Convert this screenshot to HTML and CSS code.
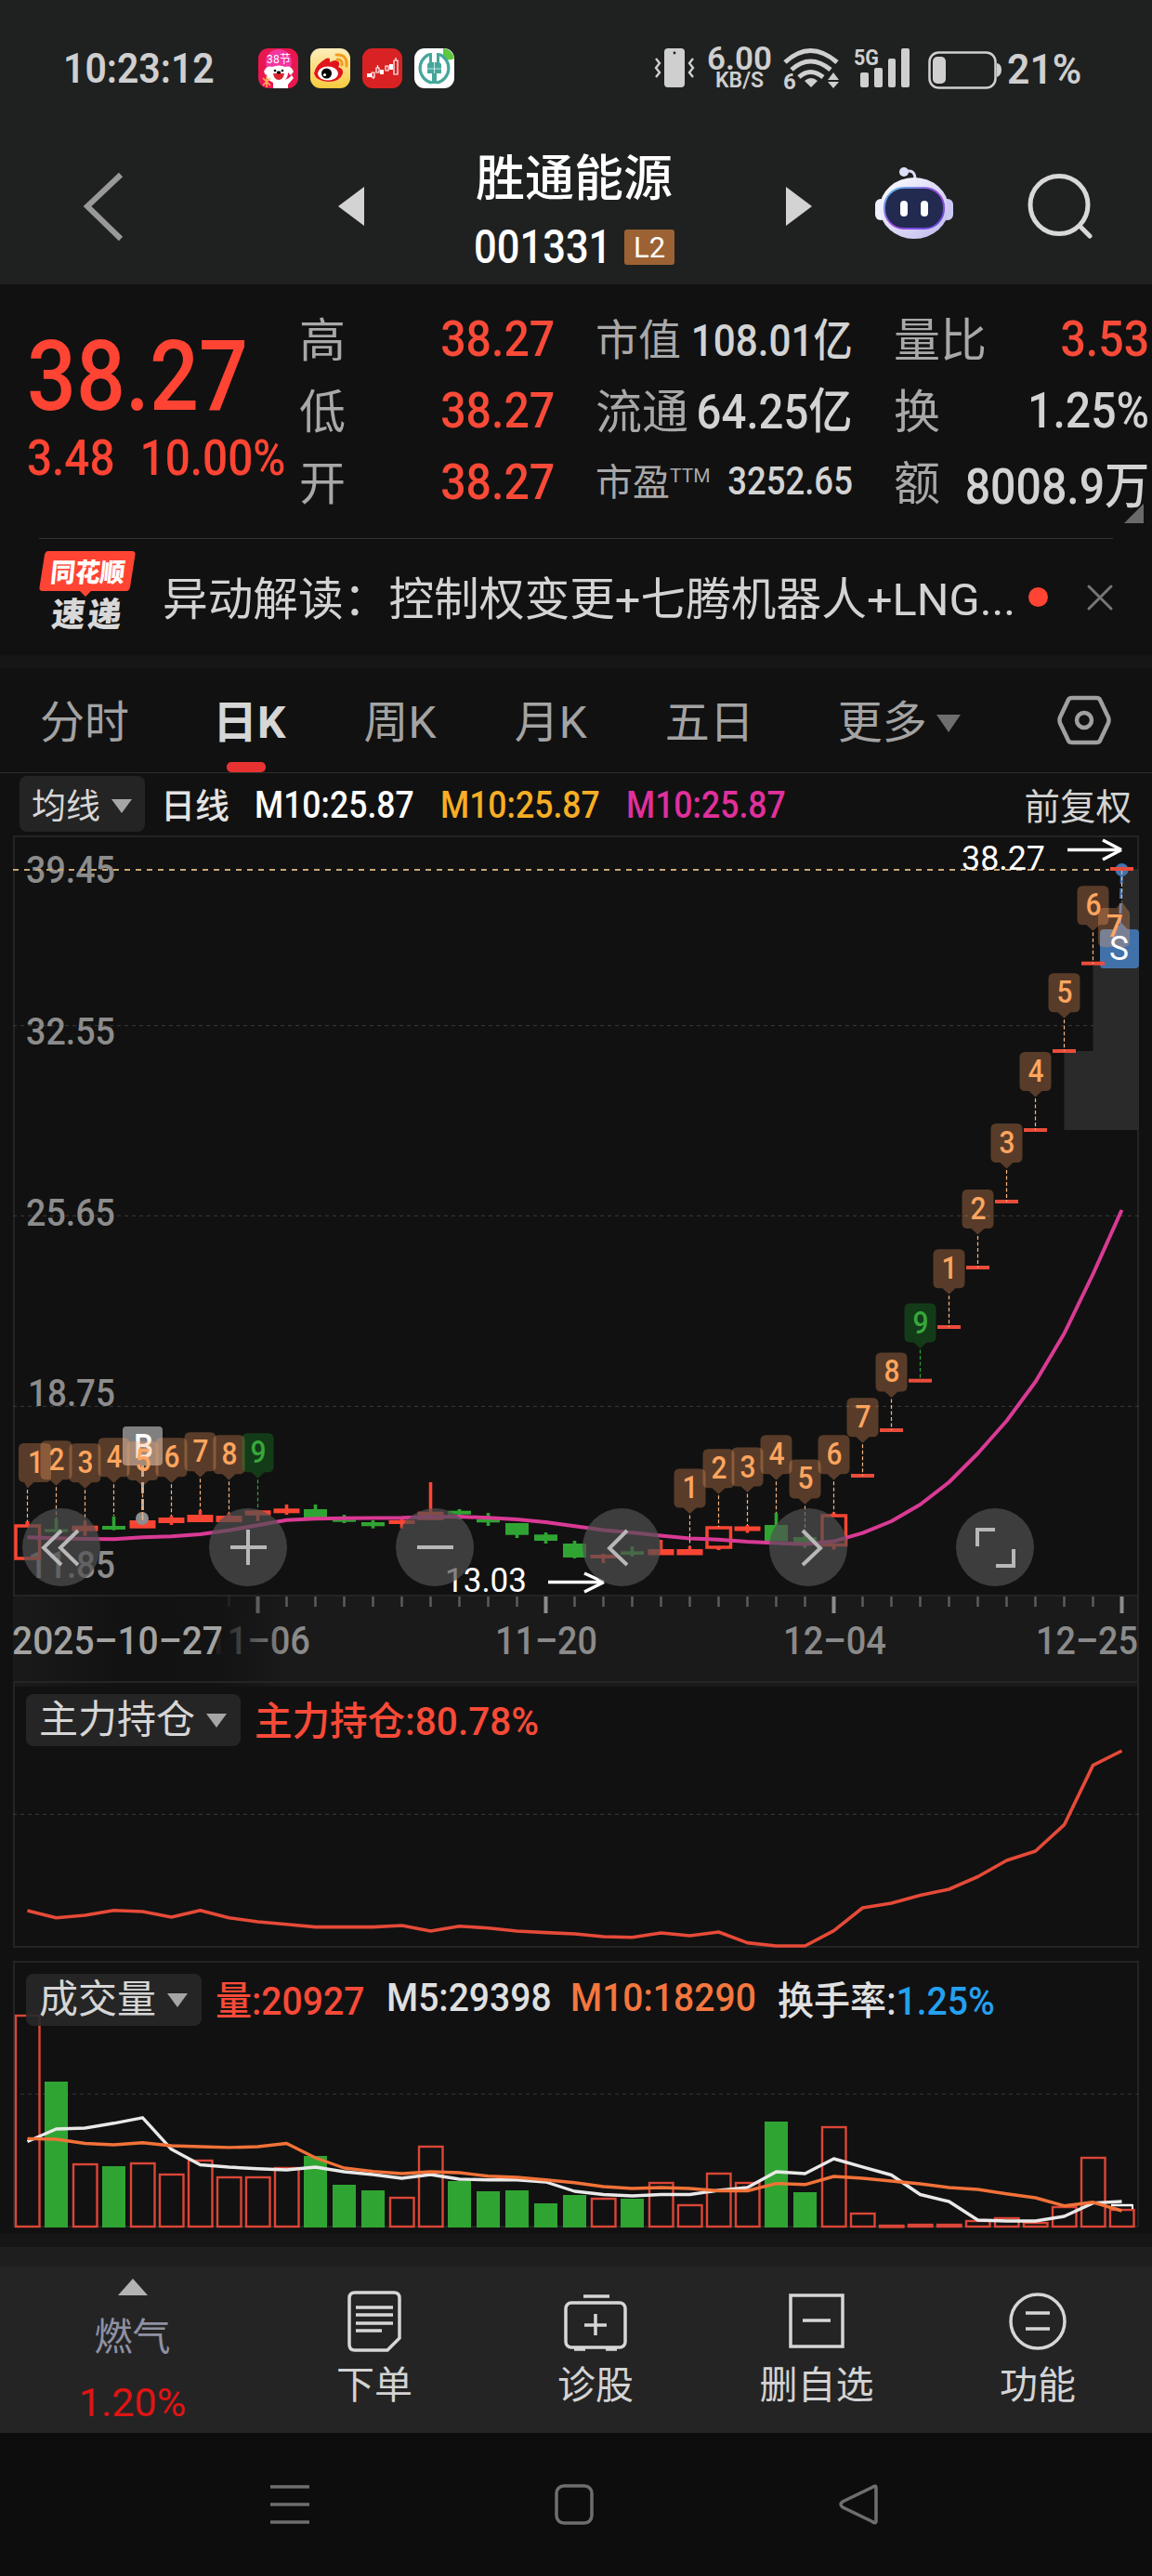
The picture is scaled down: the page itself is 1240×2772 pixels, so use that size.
FILE: index.html
```html
<!DOCTYPE html>
<html lang="zh-CN">
<head>
    <meta charset="UTF-8">
    <meta name="viewport" content="width=device-width, initial-scale=1.0">
    <title>胜通能源 001331</title>
    <link rel="stylesheet" href="styles.css">
</head>
<body>
    <header class="top">
        <div class="status-bar">
            <span class="clock">10:23:12</span>
            <div class="app-icons">
                <svg width="43" height="43" viewBox="0 0 43 43">
                    <rect width="43" height="43" rx="11" fill="#e8174f"/>
                    <circle cx="22" cy="15" r="14" fill="#f336a0"/>
                    <text x="9" y="16" font-size="12" textLength="26" fill="#fff">38节</text>
                    <path d="M6 25q3-7 9-5q7-3 14 0q6-2 9 5l-3 4l-3-3q0 6-4 8l5-2l3-3l2 3l-6 7v4H16v-6l-5-3q-2-2-2-6l-1 1z" fill="#fff"/>
                    <path d="M16 27h12q-1 7-6 7t-6-7z" fill="#d9232e"/>
                    <circle cx="18" cy="24" r="1.3"/><circle cx="26" cy="24" r="1.3"/><ellipse cx="22" cy="26" rx="2.4" ry="1.4"/>
                    <path d="M5 32l8 8M13 32l-8 8M9 30v12" stroke="#ffb35c" stroke-width="1.5"/>
                </svg>
                <svg width="43" height="43" viewBox="0 0 43 43">
                    <defs><linearGradient id="wb" x2="0" y2="1"><stop stop-color="#fdeebb"/><stop offset="1" stop-color="#f8cb3d"/></linearGradient></defs>
                    <rect width="43" height="43" rx="11" fill="url(#wb)"/>
                    <path d="M4 27Q6 17 17 11q5-2 4 4q7-4 10 0q1 3-1 5q6 2 5 7q-3 9-16 9Q6 35 4 27z" fill="#e1141d"/>
                    <ellipse cx="19" cy="27" rx="11" ry="7.5" fill="#fff"/>
                    <circle cx="17.500" cy="27" r="5.500"/><circle cx="15.500" cy="28.500" r="1.600" fill="#fff"/>
                    <path d="M28 7q12-1 11 12M29 12q6 0 5 6" fill="none" stroke="#f39a1e" stroke-width="3" stroke-linecap="round"/>
                </svg>
                <svg width="43" height="43" viewBox="0 0 43 43">
                    <rect width="43" height="43" rx="11" fill="#d92223"/>
                    <path d="M5 27h5v4H5zM19 23h4v5h-4zM29 17h4v6h-4z" fill="#fff"/>
                    <path d="M10 26h3v5h-3zM15 21h3v5h-3zM25 19h3v5h-3zM34 13h4v15h-4zM12 31v2M16.500 18v3M36 10v3" fill="none" stroke="#fff" stroke-width="1.200"/>
                </svg>
                <svg width="43" height="43" viewBox="0 0 43 43">
                    <rect width="43" height="43" rx="11" fill="#fff"/>
                    <path d="M31 0q10 1 12 11q-8 4-12-3z" fill="#5fc83c"/>
                    <path d="M16 6.500A16 16 0 0 0 19 37M27 6.500A16 16 0 0 1 24 37" fill="none" stroke="#45a79b" stroke-width="3.200"/>
                    <path d="M16 5h3v10h5V5h3v10l2 2v10h-5v11h-5V27h-5V17l2-2z" fill="#45a79b"/>
                    <path d="M14 22h15M21.500 15v12" stroke="#fff" stroke-width=".7"/>
                </svg>
            </div>
            <div class="status-right">
                <svg width="44" height="43" viewBox="0 0 44 43" fill="#cfcfcf">
                    <rect x="11" y="0" width="22" height="42" rx="4"/>
                    <circle cx="22" cy="5" r="1.400" fill="#1f2120"/>
                    <path d="M2 11l4 5l-4 5l4 5l-4 5M42 11l-4 5l4 5l-4 5l4 5" fill="none" stroke="#cfcfcf" stroke-width="2.400"/>
                </svg>
                <div class="net-speed"><b>6.00</b><span>KB/S</span></div>
                <svg class="wifi" width="62" height="45" viewBox="0 0 62 45" fill="none" stroke="#cfcfcf" stroke-width="5">
                    <path d="M2 15q27-25 56 0M9 23q20-18 42 0M17 31q12-11 26 0"/>
                    <path d="M23 35q7-6 14 0l-7 7z" fill="#cfcfcf" stroke="none"/>
                    <path d="M54 26l6 8H48zM54 43l6-7H48z" fill="#cfcfcf" stroke="none"/>
                    <text x="0" y="44" font-size="24" font-weight="700" fill="#cfcfcf" stroke="none">6</text>
                </svg>
                <svg class="signal" width="61" height="43" viewBox="0 0 61 43" fill="#cfcfcf">
                    <text x="0" y="18" font-size="24" font-weight="700" textLength="27" lengthAdjust="spacingAndGlyphs">5G</text>
                    <rect x="7" y="26" width="9" height="16" rx="2"/><rect x="22" y="21" width="9" height="21" rx="2"/>
                    <rect x="37" y="11" width="8" height="31" rx="2"/><rect x="51" y="0" width="9" height="42" rx="2"/>
                </svg>
                <svg class="battery" width="80" height="41" viewBox="0 0 80 41">
                    <rect x="1.500" y="1.500" width="71" height="38" rx="10" fill="none" stroke="#cfcfcf" stroke-width="2.500"/>
                    <rect x="5" y="6" width="14" height="29" rx="5" fill="#cfcfcf"/>
                    <path d="M74 13q5 1 5 7t-5 8z" fill="#cfcfcf"/>
                </svg>
                <span class="battery-text">21%</span>
            </div>
        </div>
        <div class="title-bar">
            <svg class="back" width="44" height="76" viewBox="0 0 44 76"><path d="M40 3L4 37L40 72" fill="none" stroke="#999" stroke-width="6"/></svg>
            <svg class="prev" width="28" height="42" viewBox="0 0 28 42"><path d="M28 0v42L0 21z" fill="#d3d3d3"/></svg>
            <div class="stock">
                <h1>胜通能源</h1>
                <div class="stock-code"><span>001331</span><i>L2</i></div>
            </div>
            <svg class="next" width="28" height="42" viewBox="0 0 28 42"><path d="M0 0v42L28 21z" fill="#d3d3d3"/></svg>
            <svg class="robot" width="84" height="78" viewBox="0 0 84 78">
                <defs>
                    <linearGradient id="head" x2="1" y2="1"><stop stop-color="#fff"/><stop offset="1" stop-color="#bdb8ee"/></linearGradient>
                    <linearGradient id="rim" x2="1" y2="1"><stop stop-color="#56c8e8"/><stop offset=".5" stop-color="#a24ae0"/><stop offset="1" stop-color="#5a4fe0"/></linearGradient>
                </defs>
                <path d="M31 5q12-4 12 8" fill="none" stroke="#dcdcf5" stroke-width="3"/>
                <circle cx="31" cy="5" r="5" fill="#dfe1fa"/>
                <rect x="0" y="34" width="12" height="23" rx="6" fill="#f0f0fc"/>
                <rect x="72" y="34" width="12" height="23" rx="6" fill="#cbc8f2"/>
                <ellipse cx="42" cy="44" rx="37" ry="33" fill="url(#head)"/>
                <rect x="10" y="22" width="64" height="44" rx="21" fill="#222a50" stroke="url(#rim)" stroke-width="2"/>
                <rect x="27" y="36" width="8" height="17" rx="4" fill="#fff"/><rect x="49" y="36" width="8" height="17" rx="4" fill="#fff"/>
            </svg>
            <svg class="search" width="72" height="70" viewBox="0 0 72 70" fill="none" stroke="#d8d8d8" stroke-width="5">
                <circle cx="34" cy="33.500" r="31"/><path d="M56 56l11 11" stroke-linecap="round"/>
            </svg>
        </div>
    </header>

    <section class="quote">
        <div class="price-box">
            <div class="price">38.27</div>
            <div class="change"><span>3.48</span><span>10.00%</span></div>
        </div>
        <div class="col col-1">
            <p><span>高</span><b class="red">38.27</b></p>
            <p><span>低</span><b class="red">38.27</b></p>
            <p><span>开</span><b class="red">38.27</b></p>
        </div>
        <div class="col col-2">
            <p class="mid"><span>市值</span><b>108.01亿</b></p>
            <p><span>流通</span><b>64.25亿</b></p>
            <p class="small"><span>市盈<sup>TTM</sup></span><b>3252.65</b></p>
        </div>
        <div class="col col-3">
            <p><span>量比</span><b class="red">3.53</b></p>
            <p><span>换</span><b>1.25%</b></p>
            <p><span>额</span><b>8008.9万</b></p>
        </div>
        <svg class="corner" width="21" height="21" viewBox="0 0 21 21"><path d="M21 0v21H0z" fill="#6a6a6a"/></svg>
    </section>

    <section class="news">
        <svg width="104" height="100" viewBox="0 0 104 100" font-weight="900">
            <path d="M10 0h90q4 0 3.500 4L98 39q-1 4-4 4H56l-6 6l-6-6H4q-4 0-3.500-4L6 4q1-4 4-4z" fill="#ff4433"/>
            <g transform="skewX(-6)">
                <text x="15" y="33" font-size="28" textLength="80" lengthAdjust="spacingAndGlyphs" fill="#fff">同花顺</text>
                <text x="21" y="81" font-size="36" textLength="75" fill="#d8d8d8">速递</text>
            </g>
        </svg>
        <p class="news-text">异动解读：控制权变更+七腾机器人+LNG...</p>
        <i class="dot"></i>
        <svg class="close" width="28" height="28" viewBox="0 0 28 28"><path d="M2 2l24 24M26 2L2 26" stroke="#777" stroke-width="3" stroke-linecap="round"/></svg>
    </section>

    <nav class="tabs">
        <a>分时</a>
        <a class="k active">日K</a>
        <a class="k">周K</a>
        <a class="k">月K</a>
        <a>五日</a>
        <a>更多<i class="caret"></i></a>
        <svg class="setting" width="58" height="54" viewBox="0 0 58 54" fill="none" stroke="#a0a0a0" stroke-width="4.500" stroke-linejoin="round">
            <path d="M16 3h26q3 0 4 2l9 19q1 3 0 6l-9 19q-1 2-4 2H16q-3 0-4-2L3 30q-1-3 0-6l9-19q1-2 4-2z"/><circle cx="29" cy="27" r="8"/>
        </svg>
    </nav>

    <div class="ma-row">
        <button class="pill">均线<i class="caret"></i></button>
        <span class="period">日线</span>
        <b class="white">M10:25.87</b>
        <b class="yellow">M10:25.87</b>
        <b class="pink">M10:25.87</b>
        <span class="adjust">前复权</span>
    </div>

    <main>
        <div class="chart">
            <svg id="kline" width="1240" height="919" viewBox="0 898 1240 919"></svg>
            <div class="chart-tools">
                <button><svg viewBox="0 0 84 84"><path d="M42 24L23 42.500L42 61M60 24L41 42.500L60 61"/></svg></button>
                <button><svg viewBox="0 0 84 84"><path d="M23 42h39M42 23v38"/></svg></button>
                <button><svg viewBox="0 0 84 84"><path d="M23 42h39"/></svg></button>
                <button><svg viewBox="0 0 84 84"><path d="M48 24L29 43L48 61"/></svg></button>
                <button><svg viewBox="0 0 84 84"><path d="M36 24L55 43L36 61"/></svg></button>
                <button><svg viewBox="0 0 84 84"><path d="M23 41V23h19M62 44v18H43"/></svg></button>
            </div>
        </div>
        <div class="chart">
            <svg id="position" width="1240" height="287" viewBox="0 1817 1240 287"></svg>
            <div class="chart-head head-position">
                <button class="pill">主力持仓<i class="caret"></i></button>
                <b class="red">主力持仓:80.78%</b>
            </div>
        </div>
        <div class="chart">
            <svg id="volume" width="1240" height="300" viewBox="0 2104 1240 300"></svg>
            <div class="chart-head head-volume">
                <button class="pill">成交量<i class="caret"></i></button>
                <b class="red">量:20927</b>
                <b class="m5">M5:29398</b>
                <b class="m10">M10:18290</b>
                <b class="rate">换手率:<em>1.25%</em></b>
            </div>
        </div>
    </main>

    <footer class="toolbar">
        <a class="sector">
            <svg width="32" height="18" viewBox="0 0 32 18"><path d="M16 0l16 18H0z" fill="#b3b3b3"/></svg>
            <span>燃气</span>
            <em>1.20%</em>
        </a>
        <a>
            <svg width="70" height="66" viewBox="0 0 70 66"><path d="M14 2h42q6 0 6 6v43L49 64H14q-6 0-6-6V8q0-6 6-6zM15 18h40M15 26h40M15 35h40M15 43h28"/></svg>
            <span>下单</span>
        </a>
        <a>
            <svg width="70" height="66" viewBox="0 0 70 66"><rect x="3" y="13" width="64" height="48" rx="6"/><path d="M22 6h28M12 63h12M46 63h12M35 25v23M23 37h24"/></svg>
            <span>诊股</span>
        </a>
        <a>
            <svg width="70" height="66" viewBox="0 0 70 66"><rect x="7" y="5" width="56" height="55"/><path d="M20 32h30"/></svg>
            <span>删自选</span>
        </a>
        <a>
            <svg width="70" height="66" viewBox="0 0 70 66"><circle cx="35" cy="33" r="29"/><path d="M22 24h26M22 41h26"/></svg>
            <span>功能</span>
        </a>
    </footer>

    <div class="system-nav">
        <svg width="42" height="44" viewBox="0 0 42 44"><path d="M0 3h42M0 22h42M0 41h42"/></svg>
        <svg width="42" height="44" viewBox="0 0 42 44"><rect x="2" y="2" width="38" height="40" rx="8"/></svg>
        <svg width="42" height="44" viewBox="0 0 42 44"><path d="M36 3.500q4-3 4 1v35q0 4-4 1L4 25q-4-3 0-6z"/></svg>
    </div>

    <script>
        var X0 = 29.5, STEP = 31;
        var RED = "#f94533", GREEN = "#30a432";

        function px(i) { return X0 + STEP * i; }

        function rect(x, y, w, h, attrs) {
            return '<rect x="' + x + '" y="' + y + '" width="' + w + '" height="' + h + '" ' + attrs + '/>';
        }

        function line(x1, y1, x2, y2, color, width, dash) {
            return '<path d="M' + x1 + ' ' + y1 + 'L' + x2 + ' ' + y2 + '" fill="none" stroke="' + color + '" stroke-width="' + width + '"' + (dash ? ' stroke-dasharray="' + dash + '"' : '') + '/>';
        }

        // every label is fitted to a fixed width
        function label(x, y, str, size, width, color, weight) {
            return '<text x="' + x + '" y="' + y + '" font-size="' + size + '" textLength="' + width + '" lengthAdjust="spacingAndGlyphs" fill="' + color + '" font-weight="' + (weight || 400) + '">' + str + '</text>';
        }

        function curve(ys, color, width) {
            var pts = ys.map(function(y, i) { return px(i) + "," + y; }).join(" ");
            return '<polyline points="' + pts + '" fill="none" stroke="' + color + '" stroke-width="' + width + '" stroke-linejoin="round"/>';
        }

        function frame(top, bottom) {
            return rect(15, top, 1210, bottom - top, 'fill="none" stroke="#242424" stroke-width="2"');
        }

        // kind, body top, body bottom, high, low
        var candles = [
            ["h", 1642, 1677, 1637, 1677], ["g", 1645.5, 1648.5, 1634, 1649], ["r", 1641.7, 1647.7, 1637, 1652.7],
            ["g", 1642, 1646, 1631.7, 1646.7], ["r", 1636, 1644.7, 1630, 1644], ["r", 1633, 1639, 1631, 1641],
            ["r", 1630, 1638, 1625, 1638], ["r", 1631, 1638, 1628, 1638], ["r", 1625.3, 1630.7, 1625, 1636.7],
            ["r", 1623.3, 1628.3, 1619, 1630], ["g", 1624, 1633, 1619, 1633], ["g", 1635.3, 1637.7, 1630, 1639],
            ["g", 1638, 1642.3, 1636, 1644.7], ["r", 1635.7, 1640, 1632, 1644.7], ["r", 1626.7, 1635.7, 1595, 1635],
            ["g", 1625.7, 1629.7, 1624, 1635], ["g", 1635, 1638.3, 1628, 1642], ["g", 1639, 1651.7, 1639, 1655],
            ["g", 1651.3, 1658, 1649, 1661], ["g", 1661, 1676, 1658, 1677], ["r", 1673, 1677, 1672, 1682],
            ["g", 1669.3, 1673, 1664, 1675], ["r", 1667, 1673.5, 1657, 1673], ["r", 1667, 1673.5, 1664, 1673],
            ["h", 1644, 1665, 1642, 1668], ["r", 1642.5, 1647.5, 1641, 1649.5], ["g", 1641, 1658.6, 1628, 1658],
            ["g", 1654, 1660, 1652, 1665.7], ["h", 1631, 1662.5, 1627.5, 1667.5]
        ];
        var limitUps = [1588, 1539, 1485.7, 1428, 1364, 1293, 1216, 1131, 1036.7, 935];

        var ma = [1654.3, 1655.3, 1656, 1656.3, 1654.3, 1653.2, 1651, 1646.7, 1641.3, 1635.7, 1634.3, 1633.7, 1633.5, 1633.3, 1632.3, 1632, 1633.3, 1635, 1638, 1642.3, 1646.4, 1649.3, 1652.5, 1655.4, 1656.8, 1659, 1660.4, 1661.8, 1658.6, 1649.6, 1637, 1619, 1595, 1564, 1529, 1487, 1435, 1371, 1302];

        // index, number, box top, stem end
        var badges = [
            [0, 1, 1553, 1637], [1, 2, 1550.3, 1634], [2, 3, 1553.3, 1637], [3, 4, 1547.3, 1631], [4, 5, 1551, 1636],
            [5, 6, 1547.3, 1631], [6, 7, 1541.3, 1625], [7, 8, 1544.3, 1628], [8, 9, 1542.3, 1626],
            [23, 1, 1580.4, 1664], [24, 2, 1559.3, 1643], [25, 3, 1557.5, 1641], [26, 4, 1544.3, 1628],
            [27, 5, 1570.4, 1654], [28, 6, 1544.3, 1628], [29, 7, 1504.3, 1588], [30, 8, 1455.4, 1539],
            [31, 9, 1402.5, 1485], [32, 1, 1344.3, 1428], [33, 2, 1280, 1364], [34, 3, 1209, 1293],
            [35, 4, 1132, 1216], [36, 5, 1047.3, 1131], [37, 6, 953.3, 1037]
        ];

        function drawBadge(b) {
            var x = px(b[0]), top = b[2];
            var left = Math.max(x - 17, 21);
            var green = b[1] === 9;
            var fill = green ? "#1fa02a" : "#ffa264";
            var bg = '<path d="M' + (left + 6) + ' ' + top + 'h22q6 0 6 6v30q0 6-6 6H' + Math.max(x + 7, left + 12) + 'L' + x + ' ' + (top + 48.5) + 'L' + Math.max(x - 7, left + 5) + ' ' + (top + 42) + 'h-' + Math.max(0, Math.max(x - 7, left + 5) - left - 6) + 'q-6 0-6-6v-30q0-6 6-6z" fill="' + fill + '" fill-opacity=".3"/>';
            return line(x, top + 50, x, b[3], green ? "#30a432" : "#f7b683", 1.2, "4 2.5") + bg +
                label(left + 9, top + 32, b[1], 33, 17, green ? "#37a83a" : "#ffa55f", 500);
        }

        function drawKline() {
            var s = "", i;
            s += rect(14, 1717, 1212, 98, 'fill="#1a1a1a"');
            s += frame(900, 1717);
            s += line(14, 1810, 1226, 1810, "#272727", 2);
            s += line(15, 1811, 15, 1817, "#242424", 2) + line(1225, 1717, 1225, 1817, "#242424", 2);
            [1103.7, 1308.3, 1513.3].forEach(function(y) { s += line(14, y, 1226, y, "#333", 1.2, "4 4"); });
            // gaps
            s += rect(1207.5, 935, 18.5, 102, 'fill="#2a2a2a"') + rect(1176.5, 1037, 49.5, 94, 'fill="#2a2a2a"') + rect(1145.5, 1131, 80.5, 85, 'fill="#2a2a2a"');

            s += label(28, 950, "39.45", 41, 96, "#8c8c8c", 500) + label(28, 1124, "32.55", 41, 96, "#8c8c8c", 500) +
                label(28, 1319, "25.65", 41, 96, "#8c8c8c", 500) + label(30, 1512.5, "18.75", 41, 94, "#8c8c8c", 500) +
                label(30, 1698, "11.85", 41, 94, "#8c8c8c", 500);
            s += line(14, 936, 1194, 936, "#c9a878", 1.8, "6 6");

            candles.forEach(function(c, i) {
                var x = px(i), color = c[0] === "g" ? GREEN : RED;
                if (c[0] === "h") {
                    s += line(x, c[3], x, c[1], color, 4) + line(x, c[2], x, c[4], color, 4);
                    s += rect(x - 12.5, c[1], 25.5, c[2] - c[1], 'fill="none" stroke="' + color + '" stroke-width="3.5"');
                } else {
                    var w = c[0] === "g" ? 25 : 28;
                    s += line(x, c[3], x, c[4], color, 3.6) + rect(x - w / 2, c[1], w, c[2] - c[1], 'fill="' + color + '"');
                }
            });

            // buy point
            s += '<circle cx="153" cy="1634" r="7" fill="#8c8c8c"/>' + rect(132, 1535, 43, 42, 'rx="4" fill="#808080"') + label(144, 1569, "B", 36, 21, "#fff", 500);
            s += line(153.5, 1577, 153.5, 1634, "#aaa", 3, "12 6");
            // sell point
            s += '<circle cx="1207.500" cy="936" r="7" fill="#4374ae"/>' + line(1207.5, 940, 1205.5, 994, "#4374ae", 3, "11 5");
            s += '<path d="M1188 1000h12l7-7l7 7h8q4 0 4 4v34q0 4-4 4h-34q-4 0-4-4v-34q0-4 4-4z" fill="#4171a9"/>';

            limitUps.forEach(function(y, k) { s += rect(px(29 + k) - 12.5, y - 2, 25, 4, 'fill="#ea4c3b"'); });
            s += curve(ma, "#d93a94", 4);
            badges.forEach(function(b) { s += drawBadge(b); });
            s += line(1207.5, 937, 1207.5, 970, "#f7b683", 1.2, "4 2.5");
            s += '<path d="M1188 977h14l5.500-7l5.500 8q3 2 3 5v30q0 6-6 6h-22q-6 0-6-6v-30q0-6 6-6z" fill="#ffa264" fill-opacity=".3"/>';
            s += label(1191, 1008, "7", 33, 18, "#ffa55f", 500) + label(1194, 1033, "S", 36, 21, "#fff", 400);

            // highest and lowest
            s += label(1035, 935.5, "38.27", 36, 90, "#fff") + line(1149, 914.5, 1206, 914.5, "#fff", 3.5) + line(1187, 904, 1207, 914.5, "#fff", 3.5) + line(1187, 925, 1207, 914.5, "#fff", 3.5);
            s += label(479, 1713, "13.03", 36, 88, "#fff") + line(590, 1702.5, 649, 1702.5, "#fff", 3.5) + line(629, 1693, 650, 1702.5, "#fff", 3.5) + line(629, 1713, 650, 1702.5, "#fff", 3.5);

            // time axis
            for (i = 7; i <= 38; i++) {
                var major = (i - 8) % 10 === 0;
                s += line(px(i), 1718, px(i), major ? 1736 : 1729, major ? "#8c8c8c" : "#5c5c5c", major ? 4 : 2.5);
            }
            s += label(223, 1780, "11–06", 42, 111, "#8a8a8a", 500) + label(533, 1780, "11–20", 42, 110, "#8a8a8a", 500) +
                label(843, 1780, "12–04", 42, 111, "#8a8a8a", 500) + label(1115, 1780, "12–25", 42, 110, "#8a8a8a", 500);
            s += '<defs><linearGradient id="fade"><stop stop-color="#1a1a1a"/><stop offset=".4" stop-color="#121212"/><stop offset=".75" stop-color="#121212" stop-opacity=".9"/><stop offset="1" stop-color="#121212" stop-opacity="0"/></linearGradient></defs>';
            s += rect(14, 1718, 295, 97, 'fill="url(#fade)"');
            s += label(13, 1780, "2025–10–27", 42, 227, "#a3a3a3", 500);
            document.getElementById("kline").innerHTML = s;
        }

        var holding = [2056, 2063.7, 2061, 2055.8, 2057, 2063, 2055.8, 2063.7, 2068, 2070.8, 2073.6, 2073.6, 2073.6, 2072, 2078, 2072.8, 2074.8, 2078, 2079.6, 2081, 2084, 2084.7, 2080, 2083, 2079, 2090.6, 2094, 2094, 2077.6, 2053, 2048, 2039.6, 2033, 2019.5, 2002, 1992, 1963.7, 1899.6, 1884];

        function drawPosition() {
            document.getElementById("position").innerHTML = frame(1810, 2095) +
                line(14, 1952.3, 1226, 1952.3, "#333", 1.2, "4 4") + curve(holding, "#e64a38", 3.6);
        }

        var volumes = [229, 157, 69, 66, 70, 58, 73, 55, 55, 65, 77, 46, 40, 33, 88, 50, 39, 40, 26, 35, 32, 31, 49, 25, 59, 49, 114, 38, 109, 16, 3, 4, 4, 8, 11, 6, 23, 76, 20];
        var falls = [1, 3, 10, 11, 12, 15, 16, 17, 18, 19, 21, 26, 27];
        var m5 = [2304.5, 2291, 2290, 2284.8, 2278.8, 2312.8, 2329.5, 2332, 2333.8, 2335, 2332, 2337, 2340, 2344, 2340, 2345, 2345.7, 2345.7, 2348, 2358, 2361.5, 2363, 2361.5, 2361.5, 2357, 2354, 2337, 2339, 2323, 2331.8, 2340.5, 2361.5, 2369, 2389, 2390, 2390, 2385, 2370.6, 2369];
        var m10 = [2301.4, 2302, 2306.5, 2308, 2305.7, 2309, 2310, 2310.9, 2310, 2306.5, 2322, 2333, 2336.6, 2339, 2337, 2338, 2341.7, 2343, 2345.7, 2348.8, 2353, 2355, 2354, 2355, 2357.5, 2357.5, 2349.6, 2350.8, 2342, 2344, 2347, 2350, 2354, 2356, 2360.7, 2365, 2373.7, 2369.8, 2379];

        function drawVolume() {
            var s = frame(2111, 2396) + line(14, 2253.5, 1226, 2253.5, "#333", 1.2, "4 4");
            volumes.forEach(function(h, i) {
                if (falls.indexOf(i) >= 0) {
                    s += rect(px(i) - 12.5, 2397 - h, 25, h, 'fill="' + GREEN + '"');
                } else {
                    s += rect(px(i) - 12.5, 2398 - h, 25.5, Math.max(h - 2, 1.5), 'fill="none" stroke="#db4637" stroke-width="2.4"');
                }
            });
            s += curve(m5, "#e9e9e9", 3.4);
            s += line(1196, 2373, 1219, 2373, "#fff", 2.5) + line(1219, 2372, 1219, 2377, "#fff", 2);
            s += curve(m10, "#f27238", 3.4);
            document.getElementById("volume").innerHTML = s;
        }

        drawKline();
        drawPosition();
        drawVolume();
    </script>
</body>
</html>
```
FILE: styles.css
```css
* {
    box-sizing: border-box;
}

body {
    margin: 0;
    width: 1240px;
    height: 2772px;
    overflow: hidden;
    background: #111;
    color: #d3d3d3;
    font-family: Roboto, "Noto Sans CJK SC", sans-serif;
}

h1, p {
    margin: 0;
    font-weight: 400;
}

b, i, em {
    font-style: normal;
    font-weight: 500;
}

svg {
    display: block;
    flex: none;
    overflow: visible;
}

button {
    border: 0;
    padding: 0;
    font: inherit;
    color: inherit;
}

.red {
    color: #f94a38;
}

/* status bar and title */
.top {
    height: 306px;
    background: #1f2120;
}

.status-bar {
    display: flex;
    height: 150px;
    padding: 52px 0 0 68px;
    color: #cfcfcf;
}

.clock {
    width: 210px;
    font-size: 45px;
    line-height: 43px;
    font-weight: 600;
    transform: scaleX(.91);
    transform-origin: left;
}

.app-icons {
    display: flex;
    gap: 13px;
}

.status-right {
    display: flex;
    margin-left: 215px;
}

.net-speed {
    width: 72px;
    margin-left: 12px;
    text-align: center;
}

.net-speed b {
    display: block;
    font-size: 35px;
    line-height: 24px;
    font-weight: 600;
}

.net-speed span {
    display: block;
    font-size: 23px;
    line-height: 22px;
    font-weight: 600;
}

.wifi {
    margin-left: 11px;
}

.signal {
    margin-left: 14px;
}

.battery {
    margin: 3px 0 0 19px;
}

.battery-text {
    width: 90px;
    margin-left: 5px;
    font-size: 45px;
    line-height: 45px;
    font-weight: 600;
    transform: scaleX(.95);
    transform-origin: left;
}

.title-bar {
    display: flex;
    align-items: flex-start;
    padding-left: 90px;
}

.back {
    margin-top: 35px;
}

.prev {
    margin: 51px 0 0 230px;
}

.stock {
    width: 220px;
    margin: 6px 0 0 120px;
    color: #fff;
}

.stock h1 {
    font-size: 53px;
    line-height: 74px;
    font-weight: 500;
    white-space: nowrap;
}

.stock-code {
    display: flex;
    align-items: center;
    height: 72px;
}

.stock-code span {
    width: 160px;
    margin-left: -2px;
    font-size: 50px;
    font-weight: 500;
    transform: scaleX(.87);
    transform-origin: left;
}

.stock-code i {
    width: 54px;
    height: 38px;
    margin-left: 2px;
    border-radius: 3px;
    background: #9c6234;
    font-size: 31px;
    line-height: 39px;
    font-weight: 400;
    text-align: center;
}

.next {
    margin: 51px 0 0 114px;
}

.robot {
    margin: 30px 0 0 68px;
}

.search {
    margin: 37px 0 0 80px;
}

/* quote */
.quote {
    position: relative;
    display: flex;
    height: 273px;
    padding: 20px 2px 0 29px;
}

.price-box {
    width: 293px;
    color: #ff4433;
}

.price {
    height: 127px;
    font-size: 106px;
    line-height: 158px;
    font-weight: 500;
    transform: scaleX(.88);
    transform-origin: left;
}

.change {
    display: flex;
    gap: 30px;
    font-size: 53px;
    line-height: 80px;
    font-weight: 500;
    transform: scaleX(.9);
    transform-origin: left;
}

.col p {
    display: flex;
    justify-content: space-between;
    align-items: center;
    height: 77px;
    font-size: 50px;
    white-space: nowrap;
}

.col span {
    margin-top: -5px;
    color: #a8a8a8;
}

.col b {
    margin-left: -30px;
    font-size: 53px;
    font-weight: 500;
    transform: scaleX(.91);
    transform-origin: right;
}

.col-1 {
    width: 275px;
}

.col-2 {
    width: 277px;
    margin-left: 44px;
}

.col-2 b {
    margin-top: -6px;
    font-size: 52px;
}

.col-2 p.mid span {
    font-size: 46px;
}

.col-2 p.mid b {
    font-size: 48px;
    transform: scaleX(.88);
}

.col-2 p.small span {
    font-size: 40px;
}

.col-2 p.small b {
    margin-top: -3px;
    font-size: 42px;
    transform: scaleX(.87);
}

.col sup {
    font-size: 21px;
    line-height: 0;
    vertical-align: 14px;
}

.col-3 {
    width: 275px;
    margin-left: 44px;
}

.corner {
    position: absolute;
    right: 9px;
    bottom: 16px;
}

/* news line */
.news {
    display: flex;
    align-items: center;
    height: 126px;
    margin: 0 42px;
    border-top: 1px solid #333;
}

.news-text {
    width: 923px;
    margin: -3px 0 0 29px;
    font-size: 48.7px;
    white-space: nowrap;
}

.dot {
    width: 21px;
    height: 21px;
    margin-left: 9px;
    border-radius: 50%;
    background: #ff4433;
}

.close {
    margin-left: auto;
}

/* tabs */
.tabs {
    position: relative;
    display: flex;
    height: 127px;
    padding: 14px 0 0 43px;
    border-top: 14px solid #161616;
    border-bottom: 1px solid #2c2c2c;
    font-size: 48px;
    line-height: 90px;
    color: #a3a3a3;
}

.tabs a {
    position: relative;
    margin-right: 90px;
    white-space: nowrap;
}

.tabs a.k {
    margin-right: 84px;
}

.caret {
    display: inline-block;
    margin-left: 12px;
    border: 11px solid transparent;
    border-top: 15px solid #a6a6a6;
    border-bottom: 0;
    vertical-align: 6px;
}

.tabs .caret {
    border-width: 19px 13px 0;
    border-top-color: #6e6e6e;
    margin-left: 10px;
}

.tabs .active {
    color: #d6d6d6;
    font-weight: 700;
}

.tabs .active::after {
    content: "";
    position: absolute;
    left: 15px;
    bottom: 0;
    width: 42px;
    height: 11px;
    border-radius: 5px;
    background: #e83232;
}

.setting {
    margin: 15px 0 0 14px;
}

/* moving averages */
.ma-row {
    display: flex;
    align-items: center;
    height: 66px;
    padding: 0 22px 0 21px;
    font-size: 39px;
    white-space: nowrap;
}

.pill {
    height: 60px;
    padding: 0 13px;
    border-radius: 8px;
    background: #242424;
    color: #d6d6d6;
    text-align: left;
}

.ma-row .pill {
    width: 135px;
    font-size: 37px;
}

.ma-row b {
    width: 200px;
    margin-top: 3px;
    font-size: 40px;
    transform: scaleX(.89);
    transform-origin: left;
}

.period {
    width: 101px;
    margin-left: 17px;
    font-size: 37px;
    font-weight: 500;
    color: #e3e3e3;
}

.white {
    color: #fff;
}

.yellow {
    color: #f6ae24;
}

.pink {
    color: #e0309c;
}

.adjust {
    margin-left: auto;
    font-size: 38.5px;
}

/* charts */
.chart {
    position: relative;
}

.chart-tools {
    position: absolute;
    left: 24px;
    top: 725px;
    display: flex;
    gap: 117px;
}

.chart-tools button {
    width: 84px;
    height: 84px;
    border-radius: 50%;
    background: rgba(80, 80, 80, .7);
}

.chart-tools path {
    fill: none;
    stroke: #b8b8b8;
    stroke-width: 4;
}

.chart-head {
    position: absolute;
    left: 28px;
    display: flex;
    align-items: center;
    font-size: 42px;
    white-space: nowrap;
}

.chart-head .pill {
    height: 56px;
    padding: 0 14px;
    background: rgba(40, 40, 40, .9);
    font-size: 42px;
    line-height: 52px;
}

.chart-head b {
    margin-top: -4px;
    transform-origin: left;
    transform: scaleX(.93);
    font-weight: 500;
}

.head-position {
    top: 5px;
}

.head-position .pill {
    width: 231px;
}

.head-position b {
    margin-left: 15px;
    transform: scaleX(.965);
}

.head-volume {
    top: 19px;
}

.head-volume .pill {
    width: 189px;
    margin-right: 15px;
}

.head-volume .red {
    width: 184px;
}

.m5 {
    width: 198px;
    color: #e0e0e0;
}

.m10 {
    width: 223px;
    color: #f5763e;
}

.rate {
    color: #e0e0e0;
}

.rate em {
    color: #24a0f0;
}

/* bottom bar */
.toolbar {
    display: flex;
    height: 214px;
    padding: 13px 0 0 23px;
    border-top: 14px solid #161616;
    background: linear-gradient(#1e1e1e 21px, #242424 21px);
    font-size: 41px;
}

.toolbar a {
    display: flex;
    flex-direction: column;
    align-items: center;
    width: 238px;
    padding-top: 34px;
}

.toolbar a span {
    margin-top: 6px;
    line-height: 60px;
}

.toolbar svg {
    fill: none;
    stroke: #d6d6d6;
    stroke-width: 3.5;
}

.toolbar .sector {
    padding: 21px 0 0;
    margin-right: 22px;
    width: 239px;
}

.toolbar .sector svg {
    stroke: none;
}

.toolbar .sector span {
    margin-top: 15px;
    color: #8f91a3;
}

.toolbar .sector em {
    margin-top: 10px;
    color: #e01414;
    font-size: 43px;
    font-weight: 400;
    line-height: 60px;
}

.system-nav {
    display: flex;
    gap: 264px;
    height: 154px;
    padding: 55px 0 0 291px;
    background: #0d0d0d;
}

.system-nav svg {
    fill: none;
    stroke: #6e6e6e;
    stroke-width: 3.5;
}
```
